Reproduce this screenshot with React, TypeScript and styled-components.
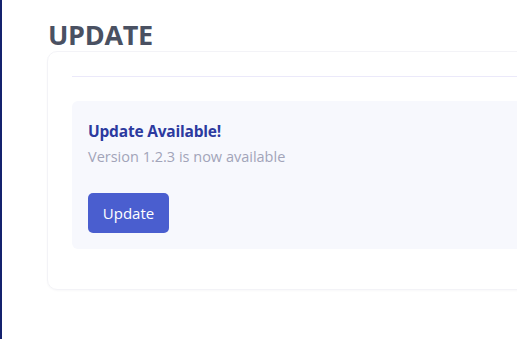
import React from "react";
import styled, { createGlobalStyle } from "styled-components";

const Global = createGlobalStyle`
  html, body { margin: 0; padding: 0; background: #fff; overflow: hidden; }
  body { font-family: "Open Sans", "Noto Sans", sans-serif; }
`;

const Page = styled.div`
  box-sizing: border-box;
  min-height: 339px;
  width: 517px;
  border-left: 2px solid #14226e;
  padding: 18px 0 0 45px;
  overflow: hidden;
`;

const Heading = styled.h1`
  margin: 0 0 0 1px;
  font-size: 27px;
  line-height: 34px;
  font-weight: 700;
  color: #4a5162;
  letter-spacing: -0.3px;
`;

const Card = styled.section`
  box-sizing: border-box;
  margin-top: -1px;
  width: 520px;
  border: 1px solid #f3f3f7;
  border-radius: 10px;
  box-shadow: 0 1px 2px rgba(30, 30, 60, 0.03);
  padding: 24px 0 40px 24px;
`;

const Divider = styled.hr`
  margin: 0 0 24px;
  border: 0;
  border-top: 1px solid #ebe9fa;
`;

const Panel = styled.div`
  background: #f7f8fd;
  border-radius: 6px;
  padding: 19px 16px 16px;
`;

const Title = styled.h2`
  margin: 0;
  font-size: 15.5px;
  line-height: 22px;
  font-weight: 700;
  color: #2c3a9f;
  letter-spacing: -0.2px;
`;

const Subtitle = styled.p`
  margin: 5px 0 0;
  font-size: 14.5px;
  line-height: 20px;
  color: #a2a4b9;
`;

const Button = styled.button`
  margin-top: 26px;
  width: 81px;
  height: 40px;
  border: 0;
  border-radius: 5px;
  background: #4a5ecf;
  color: #fff;
  font-family: inherit;
  font-size: 15px;
  cursor: pointer;
`;

export default function App() {
  return (
    <>
      <Global />
      <Page>
        <Heading>UPDATE</Heading>
        <Card>
          <Divider />
          <Panel>
            <Title>Update Available!</Title>
            <Subtitle>Version 1.2.3 is now available</Subtitle>
            <Button>Update</Button>
          </Panel>
        </Card>
      </Page>
    </>
  );
}
